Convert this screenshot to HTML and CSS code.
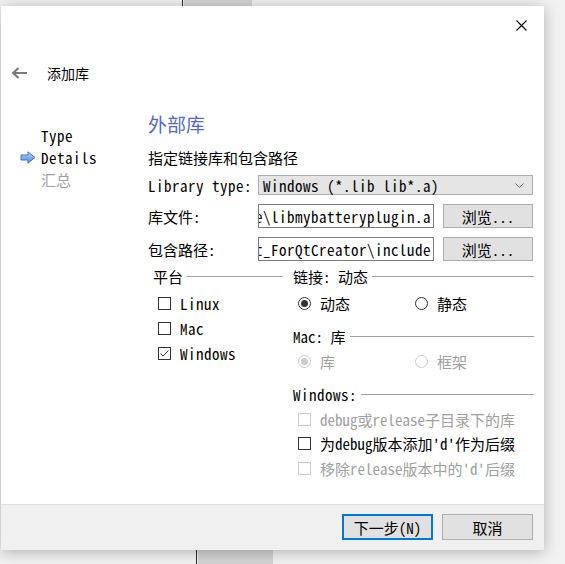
FILE: index.html
```html
<!DOCTYPE html>
<html><head>
<meta charset="utf-8">
<title>添加库</title>
<link rel="stylesheet" href="styles.css">
</head>
<body>
<div class="behind behind-line top-line"></div>
<div class="behind behind-tab top-tab"></div>
<div class="behind behind-line bottom-line"></div>
<div class="behind behind-tab bottom-tab"></div>

<div class="dialog">
  <div class="titlebar">
    <div class="close-btn">
      <svg width="11" height="11" viewBox="0 0 11 11"><path d="M0.5 0.5L10.5 10.5M10.5 0.5L0.5 10.5" stroke="#000" stroke-width="1.1" fill="none"/></svg>
    </div>
  </div>

  <div class="header">
    <svg class="back" width="16" height="12" viewBox="0 0 16 12"><path d="M16 6H3M7.5 1L2.2 6L7.5 11" stroke="#7a7a7a" stroke-width="2.2" fill="none"/></svg>
    <span class="header-title">添加库</span>
  </div>

  <div class="main">
    <div class="steps">
      <div class="step"><span class="step-icon"></span><span class="latin">Type</span></div>
      <div class="step">
        <span class="step-icon">
          <svg width="16" height="13" viewBox="0 0 16 13">
            <defs>
              <linearGradient id="arrowFill" x1="0" y1="0" x2="0" y2="1">
                <stop offset="0" stop-color="#b9d6f7"/>
                <stop offset="1" stop-color="#4f8ad9"/>
              </linearGradient>
            </defs>
            <path d="M1 4H8V0.8L15 6.5L8 12.2V9H1Z" fill="url(#arrowFill)" stroke="#3d74c6" stroke-width="1"/>
          </svg>
        </span><span class="latin">Details</span>
      </div>
      <div class="step pending"><span class="step-icon"></span>汇总</div>
    </div>

    <div class="page">
      <div class="page-title">外部库</div>
      <div class="page-subtitle">指定链接库和包含路径</div>

      <div class="form">
        <div class="form-label latin">Library type:</div>
        <div class="combo">
          <span class="latin">Windows (*.lib lib*.a)</span>
          <svg width="9" height="5" viewBox="0 0 9 5"><path d="M0.5 0.5L4.5 4.5L8.5 0.5" stroke="#707070" fill="none"/></svg>
        </div>

        <div class="form-label">库文件:</div>
        <div class="edit"><span class="latin">e\libmybatteryplugin.a</span></div>
        <div class="btn">浏览...</div>

        <div class="form-label">包含路径:</div>
        <div class="edit"><span class="latin">t_ForQtCreator\include</span></div>
        <div class="btn">浏览...</div>
      </div>

      <div class="groups">
        <div class="group platform">
          <div class="group-title"><span>平台</span></div>
          <div class="opt-row first"><span class="checkbox"></span><span class="latin">Linux</span></div>
          <div class="opt-row"><span class="checkbox"></span><span class="latin">Mac</span></div>
          <div class="opt-row">
            <span class="checkbox">
              <svg width="11" height="11" viewBox="0 0 11 11"><path d="M1.5 5.5L4 8L9.5 2.5" stroke="#333" stroke-width="1" fill="none"/></svg>
            </span><span class="latin">Windows</span>
          </div>
        </div>

        <div class="group linking">
          <div class="group-title"><span>链接: 动态</span></div>
          <div class="radio-row first">
            <div class="radio-opt"><span class="radio checked"></span>动态</div>
            <div class="radio-opt"><span class="radio"></span>静态</div>
          </div>

          <div class="group-title sub"><span>Mac: 库</span></div>
          <div class="radio-row disabled">
            <div class="radio-opt"><span class="radio checked"></span>库</div>
            <div class="radio-opt"><span class="radio"></span>框架</div>
          </div>

          <div class="group-title sub"><span class="latin">Windows:</span></div>
          <div class="opt-row win first disabled"><span class="checkbox"></span>debug或release子目录下的库</div>
          <div class="opt-row win tight"><span class="checkbox"></span>为debug版本添加'd'作为后缀</div>
          <div class="opt-row win disabled"><span class="checkbox"></span>移除release版本中的'd'后缀</div>
        </div>
      </div>
    </div>
  </div>

  <div class="footer">
    <div class="btn default">下一步(N)</div>
    <div class="btn">取消</div>
  </div>
</div>
</body></html>
```

FILE: styles.css
```css
body {
  margin: 0;
  padding: 6px 0 0 1px;
  background-color: #f2f2f2;
  font-family: "Noto Sans Mono CJK SC", "Liberation Mono", "Noto Sans CJK SC", monospace;
  font-size: 15px;
  color: #000;
  overflow: hidden;
  height: 558px;
}

/* latin runs are a touch wider in the original font */
.latin {
  letter-spacing: 0.5px;
}

/* bits of the window behind the dialog */
.behind {
  position: absolute;
}

.behind-line {
  width: 1px;
  background-color: #2b2b2b;
}

.behind-tab {
  background-color: #d4d4d4;
}

.top-line {
  left: 182px;
  top: 0;
  height: 6px;
}

.top-tab {
  left: 184px;
  top: 0;
  width: 68px;
  height: 6px;
}

.bottom-line {
  left: 196px;
  top: 550px;
  height: 14px;
}

.bottom-tab {
  left: 198px;
  top: 550px;
  width: 75px;
  height: 14px;
}

.dialog {
  position: relative;
  width: 543px;
  height: 544px;
  background-color: #fff;
  display: flex;
  flex-direction: column;
  box-shadow: 0 2px 14px rgba(0, 0, 0, 0.28);
}

.titlebar {
  height: 38px;
  display: flex;
  justify-content: flex-end;
}

.close-btn {
  width: 46px;
  height: 38px;
  display: flex;
  align-items: center;
  justify-content: center;
}

.header {
  height: 20px;
  padding: 19px 0 0 10px;
  display: flex;
  align-items: center;
}

.back {
  margin-right: 20px;
}

.header-title {
  font-family: "Noto Sans CJK SC", sans-serif;
  font-size: 14px;
}

.main {
  flex: 1;
  display: flex;
}

.steps {
  width: 128px;
  flex-shrink: 0;
  padding: 41px 0 0 19px;
}

.step {
  height: 22px;
  display: flex;
  align-items: center;
}

.step-icon {
  width: 21px;
  display: flex;
  align-items: center;
}

.step.pending {
  color: #a0a0a0;
}

.page {
  flex: 1;
  min-width: 0;
  padding: 29px 10px 0 0;
}

.page-title {
  font-size: 19px;
  line-height: 24px;
  color: #5467cf;
}

.page-subtitle {
  margin-top: 12px;
  line-height: 20px;
}

.form {
  margin-top: 7px;
  display: grid;
  grid-template-columns: 101px 176px 90px;
  grid-template-rows: 20px 24px 24px;
  column-gap: 9px;
  row-gap: 9px;
  align-items: center;
}

.form-label {
  white-space: nowrap;
}

.combo {
  grid-column: 2 / 4;
  height: 20px;
  box-sizing: border-box;
  border: 1px solid #adadad;
  background-color: #e5e5e5;
  display: flex;
  align-items: center;
  justify-content: space-between;
  padding: 0 8px 0 4px;
  white-space: nowrap;
}

.edit {
  height: 24px;
  box-sizing: border-box;
  border: 1px solid #7a7a7a;
  background-color: #fff;
  display: flex;
  align-items: center;
  justify-content: flex-end;
  overflow: hidden;
  padding-right: 2px;
  white-space: nowrap;
}

.btn {
  height: 24px;
  box-sizing: border-box;
  border: 1px solid #adadad;
  background-color: #e1e1e1;
  display: flex;
  align-items: center;
  justify-content: center;
  white-space: nowrap;
}

.groups {
  margin-top: 5px;
  display: flex;
  gap: 10px;
}

.group.platform {
  width: 130px;
  flex-shrink: 0;
  margin-left: 5px;
}

.group.linking {
  flex: 1;
  min-width: 0;
}

.group-title {
  height: 20px;
  display: flex;
  align-items: center;
  white-space: nowrap;
}

.group-title::after {
  content: "";
  flex: 1;
  height: 1px;
  margin-left: 4px;
  background-color: #a0a0a0;
}

.group-title.sub {
  margin-top: 13px;
}

.opt-row {
  height: 20px;
  margin-top: 5px;
  padding-left: 5px;
  display: flex;
  align-items: center;
  white-space: nowrap;
}

.opt-row.first,
.radio-row.first {
  margin-top: 7px;
}

.opt-row.win.first {
  margin-top: 5px;
}

.opt-row.win.tight {
  margin-top: 4px;
}

.radio-row {
  height: 20px;
  margin-top: 5px;
  padding-left: 5px;
  display: flex;
}

.radio-opt {
  width: 117px;
  display: flex;
  align-items: center;
}

.checkbox {
  width: 13px;
  height: 13px;
  box-sizing: border-box;
  border: 1px solid #333;
  background-color: #fff;
  margin-right: 9px;
  display: flex;
  align-items: center;
  justify-content: center;
  flex-shrink: 0;
}

.radio {
  width: 13px;
  height: 13px;
  box-sizing: border-box;
  border: 1px solid #333;
  border-radius: 50%;
  background-color: #fff;
  margin-right: 9px;
  display: flex;
  align-items: center;
  justify-content: center;
  flex-shrink: 0;
}

.radio.checked::after {
  content: "";
  width: 7px;
  height: 7px;
  border-radius: 50%;
  background-color: #333;
}

.disabled {
  color: #a0a0a0;
}

.disabled .checkbox,
.disabled .radio {
  border-color: #cccccc;
}

.disabled .radio.checked::after {
  background-color: #cccccc;
}

.footer {
  height: 46px;
  box-sizing: border-box;
  border-top: 1px solid #dfdfdf;
  background-color: #f0f0f0;
  display: flex;
  justify-content: flex-end;
  align-items: flex-start;
  gap: 9px;
  padding: 9px 11px 0 0;
}

.footer .btn {
  width: 91px;
  height: 26px;
}

.footer .btn.default {
  border: 2px solid #0078d7;
}
```
